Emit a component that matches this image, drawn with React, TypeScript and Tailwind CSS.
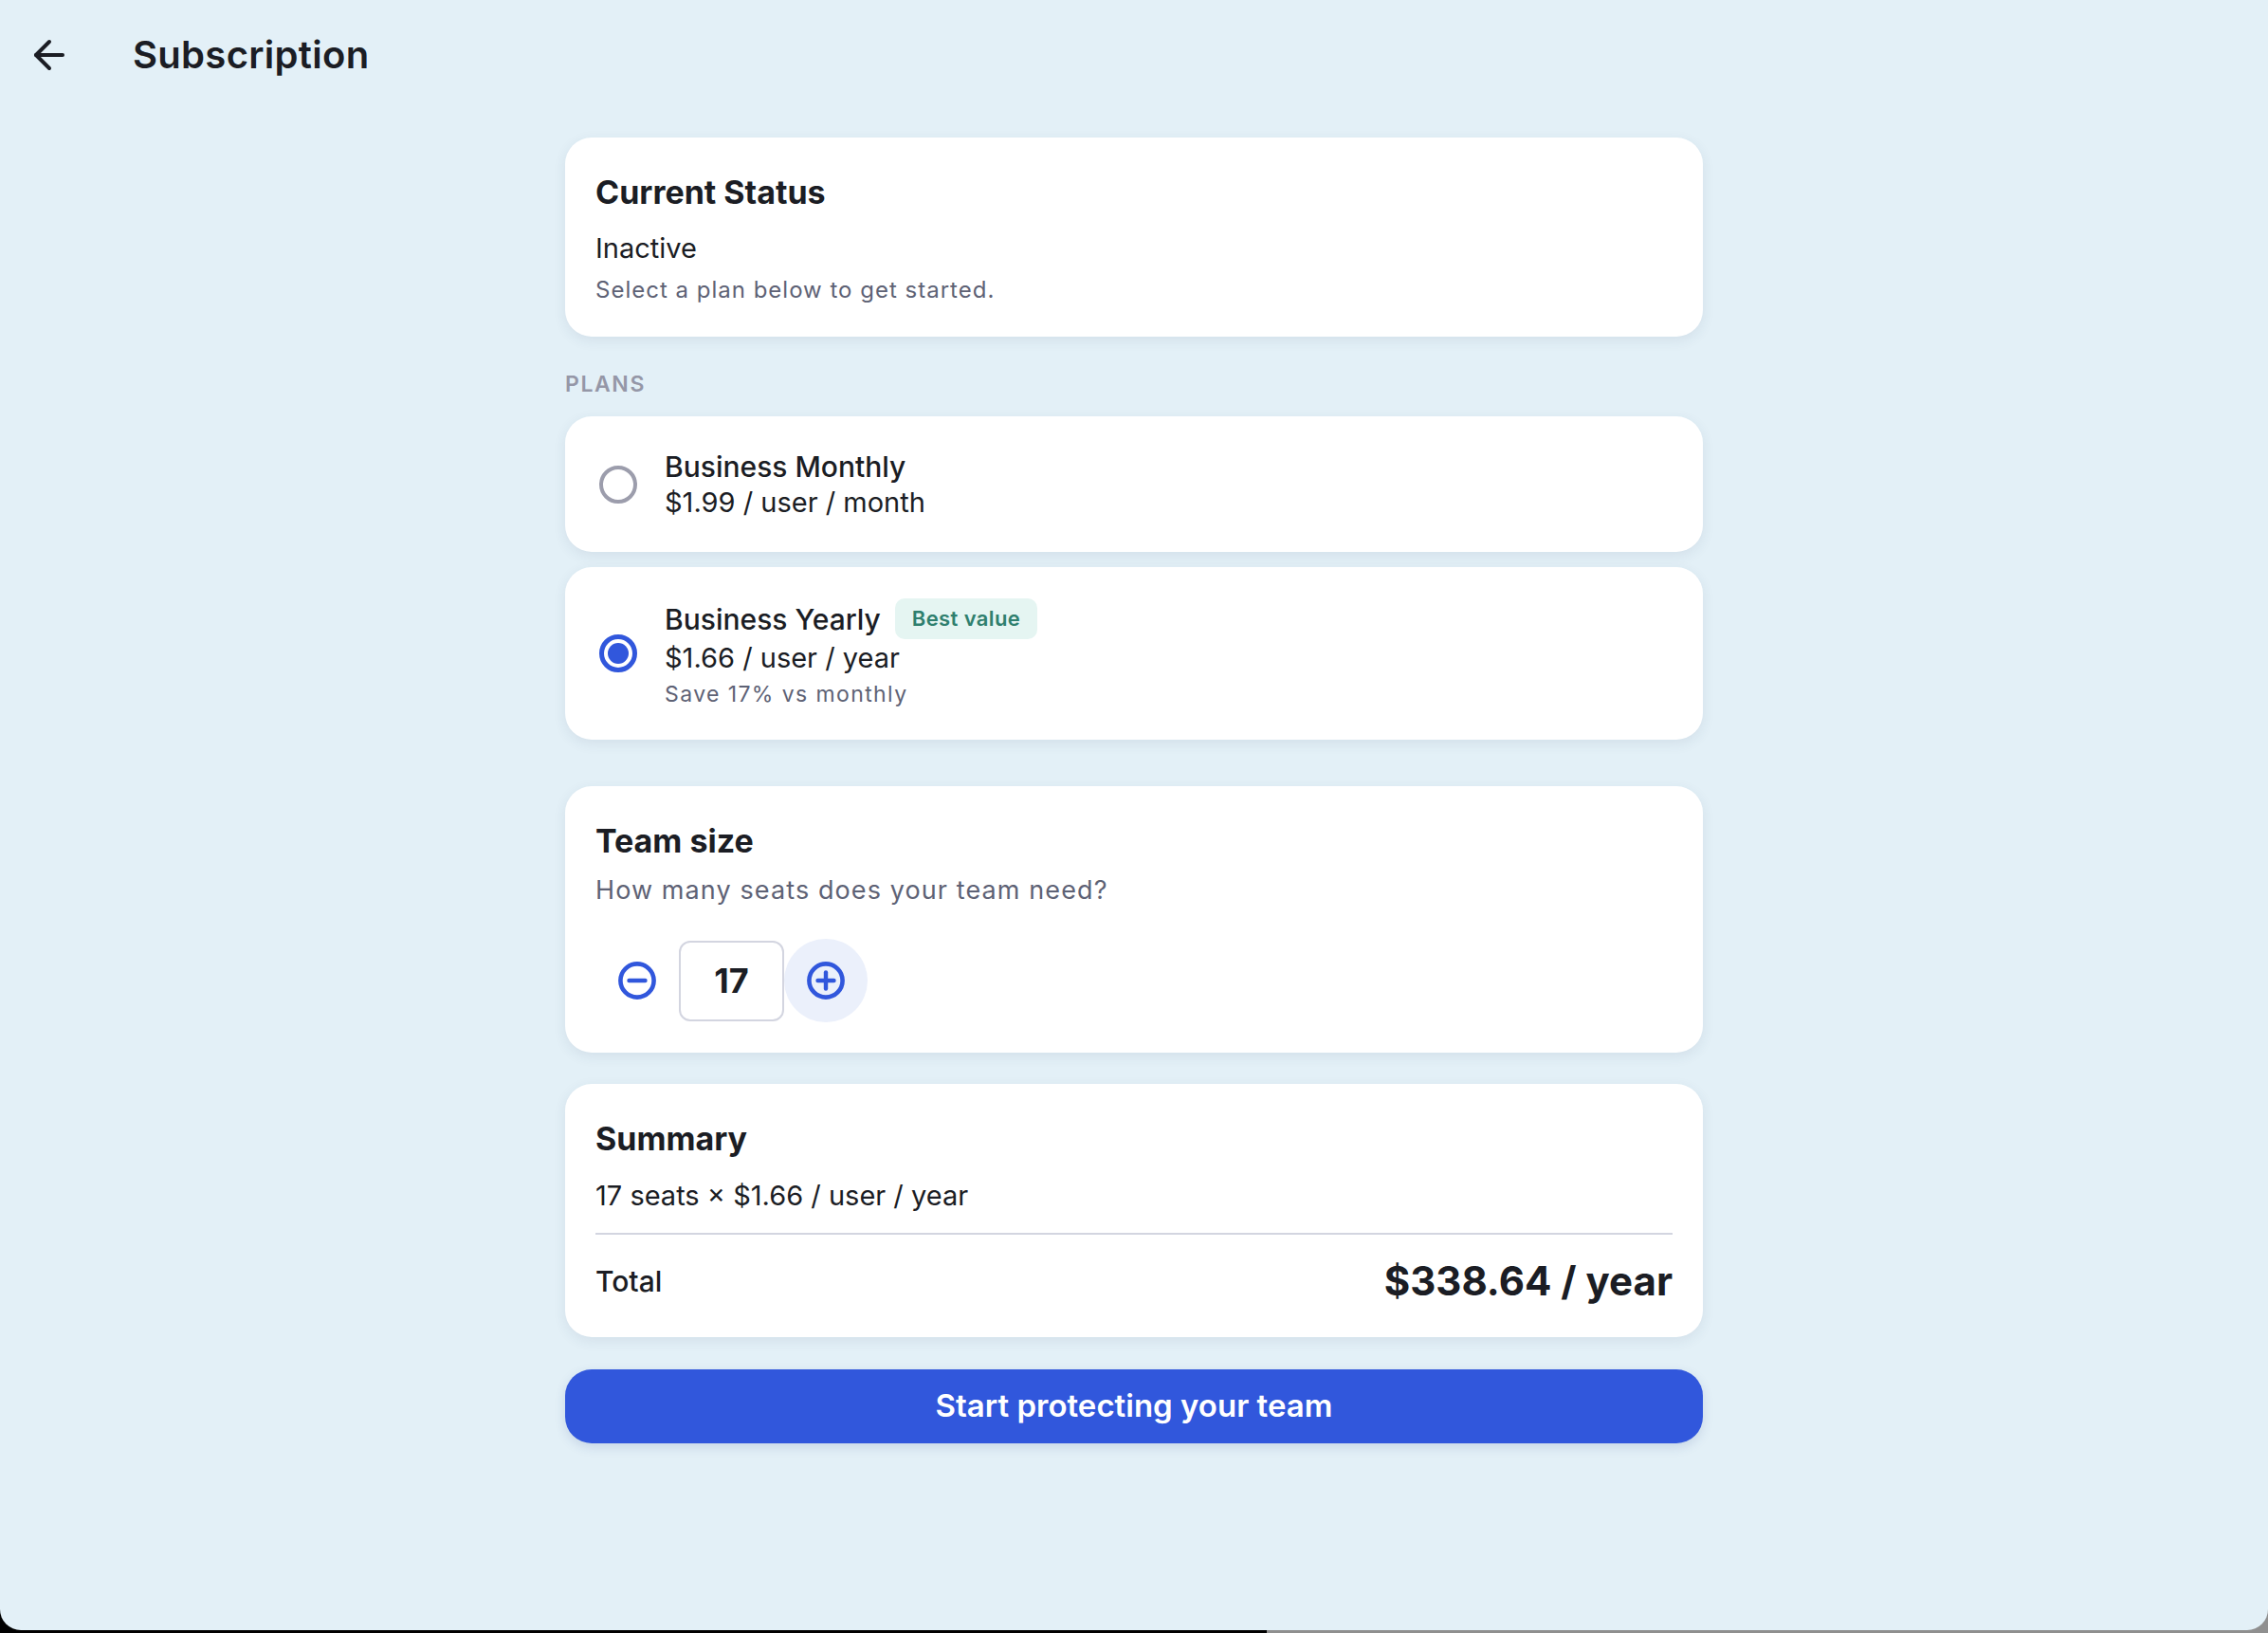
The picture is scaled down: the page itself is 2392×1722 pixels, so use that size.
import { ArrowLeft } from "lucide-react";
import { useState } from "react";

const font = { fontFamily: "Inter, 'Noto Sans', 'Liberation Sans', sans-serif" };

type PlanId = "monthly" | "yearly";

function Radio({ checked }: { checked: boolean }) {
  if (checked) {
    return (
      <div className="flex h-10 w-10 shrink-0 items-center justify-center rounded-full border-[5px] border-[#3157dc]">
        <div className="h-[22px] w-[22px] rounded-full bg-[#3157dc]" />
      </div>
    );
  }
  return <div className="h-10 w-10 shrink-0 rounded-full border-[4px] border-[#9c9dac]" />;
}

function StepIcon({ plus }: { plus?: boolean }) {
  return (
    <svg width="40" height="40" viewBox="0 0 40 40" fill="none">
      <circle cx="20" cy="20" r="17.6" stroke="#3157dc" strokeWidth="4.6" />
      <line x1="11.5" y1="20" x2="28.5" y2="20" stroke="#3157dc" strokeWidth="4.4" strokeLinecap="round" />
      {plus ? (
        <line x1="20" y1="11.5" x2="20" y2="28.5" stroke="#3157dc" strokeWidth="4.4" strokeLinecap="round" />
      ) : null}
    </svg>
  );
}

const cardClass = "rounded-[28px] bg-white shadow-[0_4px_14px_rgba(40,70,100,0.09)]";

export default function App() {
  const [plan, setPlan] = useState<PlanId>("yearly");
  const [seats, setSeats] = useState(17);

  // yearly is quoted per month, billed for 12 months
  const price = plan === "yearly" ? 1.66 : 1.99;
  const unit = plan === "yearly" ? "year" : "month";
  const total = (seats * price * (plan === "yearly" ? 12 : 1)).toFixed(2);

  return (
    <div
      className="h-[1722px] w-full bg-[linear-gradient(to_right,#000_1336px,#8f8f8f_1336px)]"
      style={font}
    >
      <div className="h-[1719px] w-full overflow-hidden rounded-b-[22px] bg-[#e3f0f7] text-[#1b1d24]">
        <header className="flex h-[116px] items-center px-[28px]">
          <button type="button" className="flex h-12 w-12 items-center justify-center text-[#1b1d24]">
            <ArrowLeft size={48} strokeWidth={2} />
          </button>
          <h1 className="ml-[64px] text-[40px] font-semibold leading-[48px] tracking-[0.3px]">Subscription</h1>
        </header>

        <main className="mx-auto w-[1200px] pt-[29px]">
          <section className={`${cardClass} px-[32px] pb-[33px] pt-[38px]`}>
            <h2 className="text-[34px] font-bold leading-[40px]">Current Status</h2>
            <div className="mt-[21px] text-[29px] leading-[36px]">Inactive</div>
            <div className="mt-[10px] text-[24px] leading-[32px] tracking-[1px] text-[#5e6275]">
              Select a plan below to get started.
            </div>
          </section>

          <div className="mt-[36px] text-[23px] font-semibold leading-[28px] tracking-[1.6px] text-[#9597a7]">PLANS</div>

          <div className="mt-[20px] flex flex-col gap-[16px]">
            <button
              type="button"
              onClick={() => setPlan("monthly")}
              className={`${cardClass} flex h-[143px] items-center pl-[36px] text-left`}
            >
              <Radio checked={plan === "monthly"} />
              <div className="ml-[29px]">
                <div className="text-[30px] font-medium leading-[38px]">Business Monthly</div>
                <div className="text-[29px] leading-[38px]">$1.99 / user / month</div>
              </div>
            </button>

            <button
              type="button"
              onClick={() => setPlan("yearly")}
              className={`${cardClass} flex h-[182px] items-center pl-[36px] text-left`}
            >
              <Radio checked={plan === "yearly"} />
              <div className="ml-[29px]">
                <div className="flex h-[43px] items-center">
                  <span className="text-[30px] font-medium leading-[38px]">Business Yearly</span>
                  <span className="ml-[15px] flex h-[43px] items-center rounded-[10px] bg-[#e5f5f2] px-[18px] text-[22px] font-semibold tracking-[0.4px] text-[#2f7f6e]">
                    Best value
                  </span>
                </div>
                <div className="mt-[2px] text-[29px] leading-[36px]">$1.66 / user / year</div>
                <div className="mt-[5px] text-[23px] leading-[30px] tracking-[1.4px] text-[#5e6275]">
                  Save 17% vs monthly
                </div>
              </div>
            </button>
          </div>

          <section className={`${cardClass} mt-[49px] px-[32px] pb-[32px] pt-[38px]`}>
            <h2 className="text-[34px] font-bold leading-[40px]">Team size</h2>
            <div className="mt-[14px] text-[27px] leading-[36px] tracking-[1.1px] text-[#5e6275]">
              How many seats does your team need?
            </div>
            <div className="mt-[33px] flex items-center">
              <button
                type="button"
                onClick={() => setSeats((current) => Math.max(1, current - 1))}
                className="flex h-[88px] w-[88px] items-center justify-center rounded-full"
              >
                <StepIcon />
              </button>
              <div className="flex h-[85px] w-[111px] items-center justify-center rounded-[12px] border-2 border-[#d3d5e0] text-[36px] font-bold">
                {seats}
              </div>
              <button
                type="button"
                onClick={() => setSeats((current) => current + 1)}
                className="flex h-[88px] w-[88px] items-center justify-center rounded-full bg-[#ebf0fb]"
              >
                <StepIcon plus />
              </button>
            </div>
          </section>

          <section className={`${cardClass} mt-[33px] px-[32px] pb-[35px] pt-[38px]`}>
            <h2 className="text-[34px] font-bold leading-[40px]">Summary</h2>
            <div className="mt-[22px] text-[29px] leading-[36px]">
              {seats} seats × ${price.toFixed(2)} / user / {unit}
            </div>
            <div className="mt-[21px] h-[2px] bg-[#d3d5e0]" />
            <div className="mt-[25px] flex items-center justify-between">
              <span className="text-[30px] font-medium leading-[36px]">Total</span>
              <span className="text-[42px] font-bold leading-[48px]">
                ${total} / {unit}
              </span>
            </div>
          </section>

          <button
            type="button"
            className="mt-[34px] flex h-[78px] w-full items-center justify-center rounded-[28px] bg-[#3157dc] text-[33px] font-semibold text-white shadow-[0_4px_12px_rgba(40,70,140,0.15)]"
          >
            Start protecting your team
          </button>
        </main>
      </div>
    </div>
  );
}
